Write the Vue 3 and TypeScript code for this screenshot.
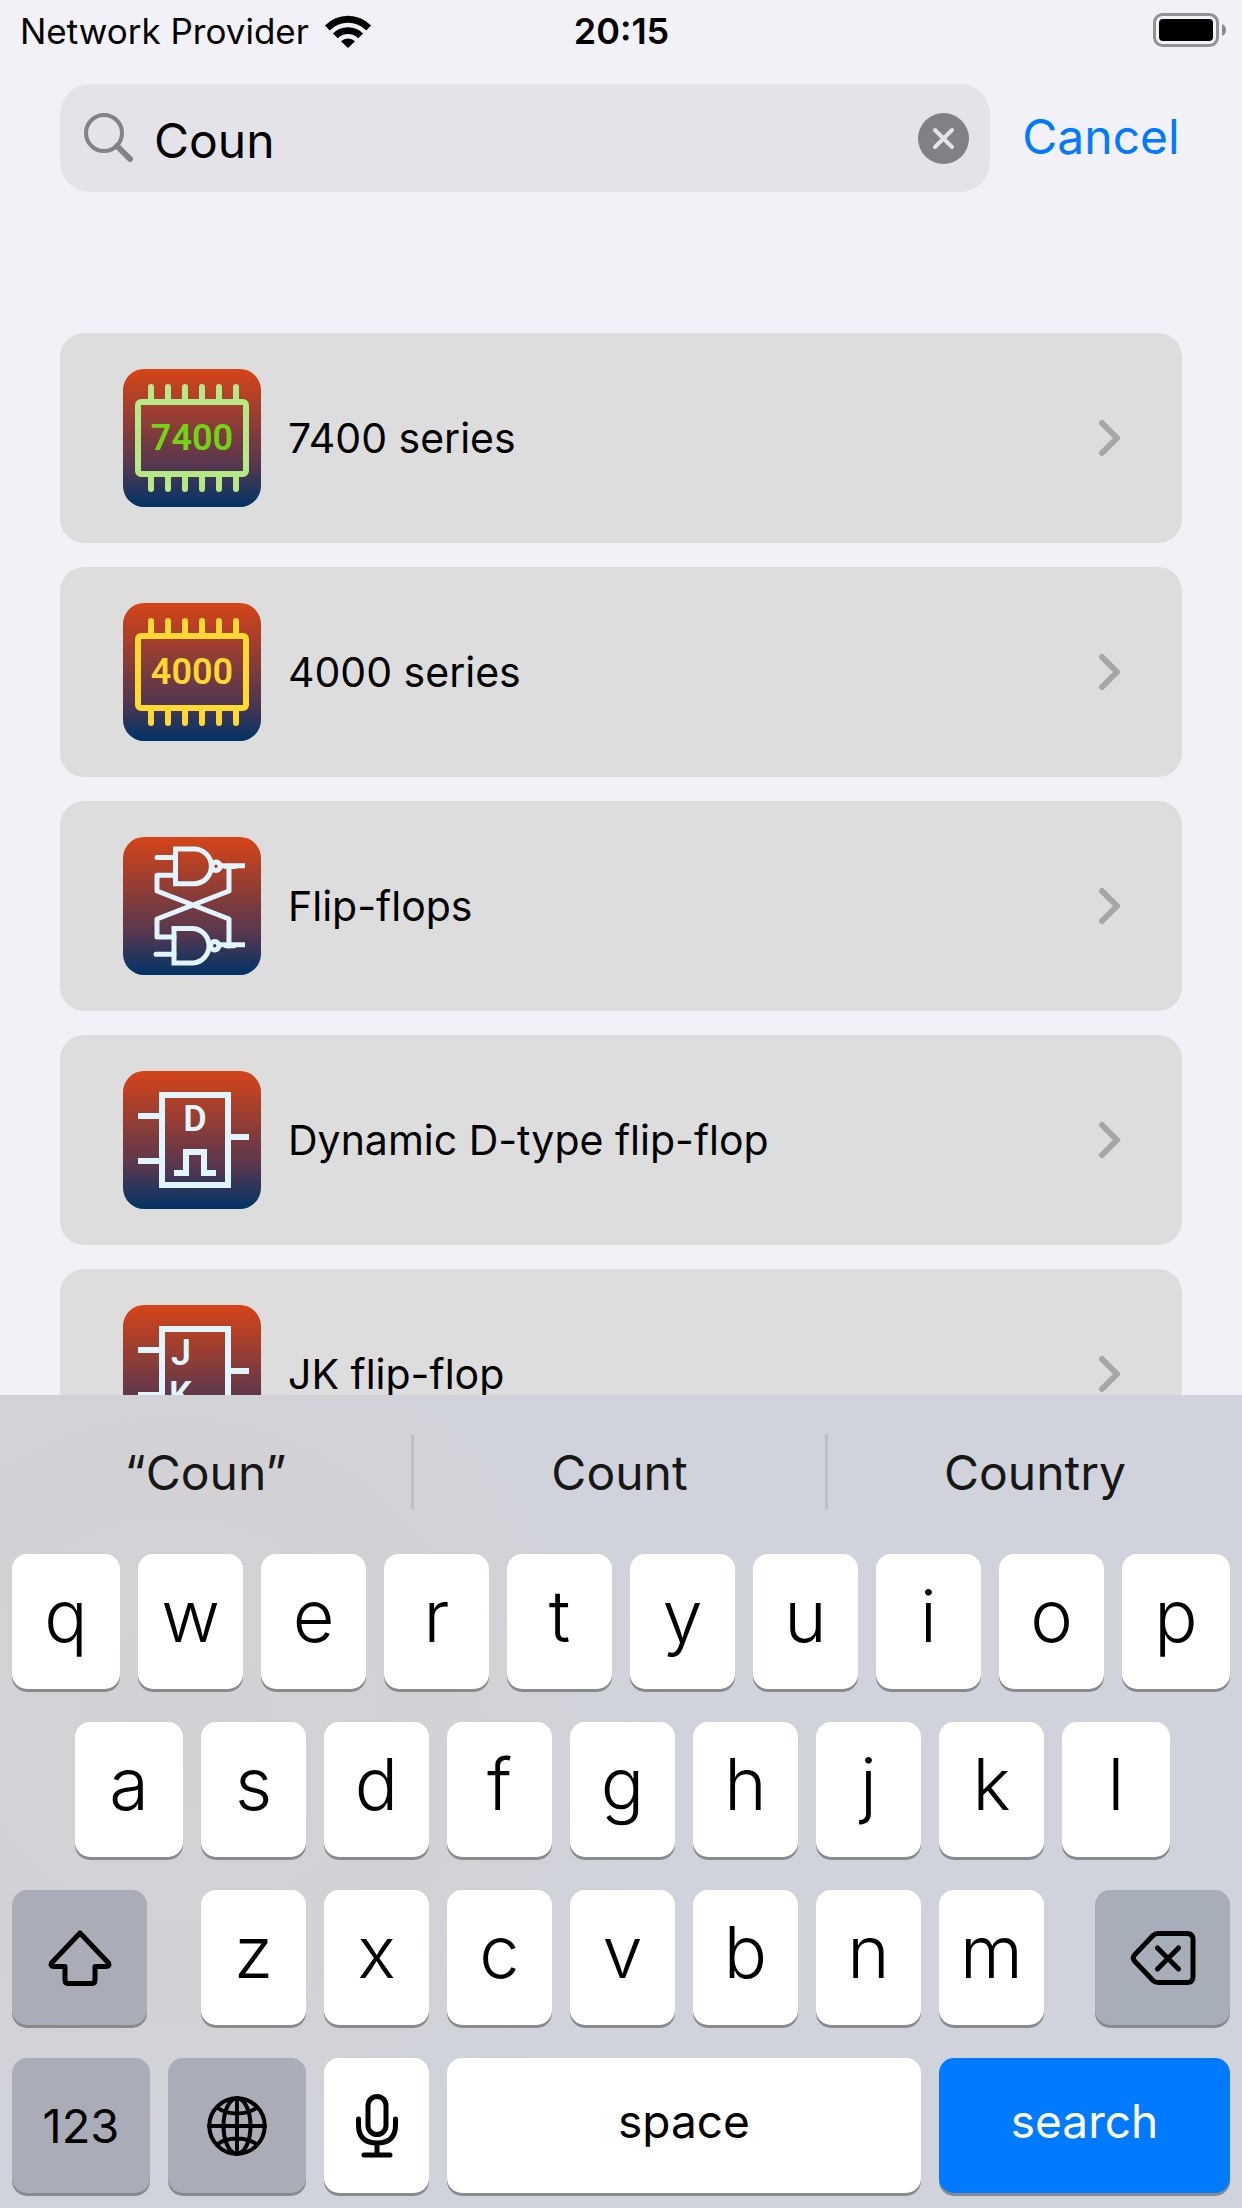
<script setup lang="ts">
import { ref } from 'vue'

type IconKind = 'chip' | 'latch' | 'dtype' | 'jk'

interface Entry {
  title: string
  icon: IconKind
  text?: string
  line?: string
  fill?: string
}

const query = ref('Coun')

const entries: Entry[] = [
  { title: '7400 series', icon: 'chip', text: '7400', line: '#b6e888', fill: '#72d414' },
  { title: '4000 series', icon: 'chip', text: '4000', line: '#ffd932', fill: '#ffd932' },
  { title: 'Flip-flops', icon: 'latch' },
  { title: 'Dynamic D-type flip-flop', icon: 'dtype' },
  { title: 'JK flip-flop', icon: 'jk' },
]

const pins = [28, 45, 62, 79, 96, 113]
const suggestions = ['“Coun”', 'Count', 'Country']
const topRow = [...'qwertyuiop']
const homeRow = [...'asdfghjkl']
const bottomRow = [...'zxcvbnm']
</script>

<template>
  <div class="screen">
    <header class="status">
      <div class="carrier">
        <span>Network Provider</span>
        <svg class="wifi" viewBox="0 0 46 34" aria-hidden="true">
          <path d="M0 11.5A32 32 0 0 1 46 11.5L41.200 16.400A25.500 25.500 0 0 0 4.800 16.400Z" />
          <path d="M8 19.500A21 21 0 0 1 38 19.500L33.200 24.300A14.500 14.500 0 0 0 12.800 24.300Z" />
          <path d="M16 27.300A10 10 0 0 1 30 27.300L23 34Z" />
        </svg>
      </div>
      <time class="clock">20:15</time>
      <svg class="battery" viewBox="0 0 74 34" aria-hidden="true">
        <rect x="1.500" y="1.500" width="63" height="31" rx="8" fill="none" stroke="#929196" stroke-width="3" />
        <rect x="6" y="6" width="54" height="22" rx="4" />
        <path d="M69 11Q73 12.500 73 17T69 23Z" fill="#8b8a8f" />
      </svg>
    </header>

    <form class="search" role="search" @submit.prevent>
      <div class="field">
        <svg class="lens" viewBox="0 0 50 50" aria-hidden="true">
          <circle cx="20" cy="20" r="18" />
          <path d="M33 33L46 46" stroke-width="6" />
        </svg>
        <input v-model="query" type="text" aria-label="Search" />
        <button class="clear" type="button" aria-label="Clear text" @click="query = ''">
          <svg viewBox="0 0 51 51">
            <circle cx="25.500" cy="25.500" r="25.500" fill="#808085" />
            <path d="M17 17L34 34M34 17L17 34" stroke="#e4e3e9" stroke-width="4" stroke-linecap="round" />
          </svg>
        </button>
      </div>
      <button class="cancel" type="button">Cancel</button>
    </form>

    <svg class="defs" aria-hidden="true">
      <linearGradient id="tile" x1="0" y1="0" x2="0" y2="1">
        <stop offset="0" stop-color="#d64417" />
        <stop offset="0.700" stop-color="#55374f" />
        <stop offset="1" stop-color="#003366" />
      </linearGradient>
    </svg>

    <main class="list">
      <a v-for="entry in entries" :key="entry.title" class="card" href="#">
        <svg class="icon" viewBox="0 0 138 138" aria-hidden="true">
          <rect width="138" height="138" rx="21" fill="url(#tile)" />
          <g v-if="entry.icon === 'chip'" :stroke="entry.line" stroke-width="6" stroke-linecap="round" fill="none">
            <rect x="15" y="33" width="108" height="72" rx="3" />
            <path v-for="x in pins" :key="x" :d="`M${x} 18V32M${x} 106V120`" />
            <text x="69" y="81" text-anchor="middle" class="glyph" :fill="entry.fill" stroke="none">{{ entry.text }}</text>
          </g>
          <g v-else-if="entry.icon === 'latch'" class="line thin">
            <path d="M52.500 12H71A17.300 17.300 0 0 1 71 46.700H52.500Z" />
            <circle cx="93" cy="29.300" r="4.200" />
            <path d="M51 91.500H70A17.300 17.300 0 0 1 70 126H51Z" />
            <circle cx="91.700" cy="108.700" r="4.200" />
            <path d="M34 20.500H52M52 38.300H34V54L106 82V109M106 29V54L34 82V100H51M33 117.300H51" stroke-linecap="round" stroke-linejoin="round" />
            <path d="M97 28.700H122M96 107.800H122" />
            <path d="M103 29.500H112M103 108.700H111" stroke-width="5" stroke-linecap="round" />
          </g>
          <g v-else class="line">
            <rect x="39" y="24" width="66" height="90" />
            <path d="M15 45H39M15 90H39M105 66H126" />
            <template v-if="entry.icon === 'dtype'">
              <path d="M51 102H63V81H81V102H93" />
              <text x="72" y="60" text-anchor="middle" class="glyph letter">D</text>
            </template>
            <template v-else>
              <text x="48" y="60" class="glyph letter">J</text>
              <text x="46" y="102" class="glyph letter">K</text>
            </template>
          </g>
        </svg>
        <span class="title">{{ entry.title }}</span>
        <svg class="chevron" viewBox="0 0 22 36" aria-hidden="true">
          <path d="M3 3L18 18L3 33" />
        </svg>
      </a>
    </main>

    <section class="keyboard" aria-label="Keyboard">
      <div class="suggestions">
        <button v-for="word in suggestions" :key="word" type="button">{{ word }}</button>
      </div>
      <div class="rows">
        <div class="row">
          <button v-for="k in topRow" :key="k" class="key" type="button">{{ k }}</button>
        </div>
        <div class="row home">
          <button v-for="k in homeRow" :key="k" class="key" type="button">{{ k }}</button>
        </div>
        <div class="row shiftrow">
          <button class="key mod side" type="button" aria-label="Shift">
            <svg class="wide" viewBox="0 0 66 56">
              <path d="M33 3L61.500 33Q63 36.500 59 36.500H48V50Q48 53.500 44.500 53.500H21.500Q18 53.500 18 50V36.500H7Q3 36.500 4.500 33Z" />
            </svg>
          </button>
          <div class="row letters">
            <button v-for="k in bottomRow" :key="k" class="key" type="button">{{ k }}</button>
          </div>
          <button class="key mod side" type="button" aria-label="Delete">
            <svg class="wide" viewBox="0 0 66 56">
              <path d="M28 3.500H57Q63 3.500 63 9.500V46.500Q63 52.500 57 52.500H28Q25 52.500 23 50.500L4.500 31Q2 28 4.500 25L23 5.500Q25 3.500 28 3.500ZM27.500 18L48.500 39M48.500 18L27.500 39" />
            </svg>
          </button>
        </div>
        <div class="row">
          <button class="key mod fn digits" type="button">123</button>
          <button class="key mod fn" type="button" aria-label="Next keyboard">
            <svg class="globe" viewBox="0 0 60 60">
              <circle cx="30" cy="30" r="27.700" />
              <ellipse cx="30" cy="30" rx="13.500" ry="27.700" />
              <path d="M30 2V58M2 30H58M10 11.500Q18 17.500 30 17.500T50 11.500M10 48.500Q18 42.500 30 42.500T50 48.500" />
            </svg>
          </button>
          <button class="key mic" type="button" aria-label="Dictate">
            <svg viewBox="0 0 42 64">
              <rect x="12" y="2.500" width="18" height="38" rx="9" />
              <path d="M2.500 25V31Q2.500 49 21 49T39.500 31V25M21 49V60M8 61H34" />
            </svg>
          </button>
          <button class="key word space" type="button">space</button>
          <button class="key word go" type="submit">search</button>
        </div>
      </div>
    </section>
  </div>
</template>

<style>
body {
  margin: 0;
  background: #f2f1f7;
}
</style>

<style scoped>
.screen {
  display: flex;
  flex-direction: column;
  height: 100vh;
  overflow: hidden;
  background: #f2f1f7;
  color: #000;
  font-family: Inter, 'Liberation Sans', sans-serif;
}

button {
  margin: 0;
  padding: 0;
  border: 0;
  background: none;
  color: inherit;
  font: inherit;
}

svg {
  display: block;
  flex: none;
}

.defs {
  position: absolute;
  width: 0;
  height: 0;
}

.status {
  display: grid;
  grid-template-columns: 1fr auto 1fr;
  align-items: center;
  height: 60px;
  padding: 0 15px 0 16px;
  margin-bottom: 24px;
  font-size: 36px;
}

.carrier {
  display: flex;
  align-items: center;
  gap: 12px;
  padding: 2px 0 0 4px;
  font-size: 35px;
}

.carrier span {
  padding-right: 4px;
}

.wifi {
  width: 46px;
  height: 34px;
}

.clock {
  padding-top: 2px;
  font-weight: 600;
}

.battery {
  justify-self: end;
  width: 74px;
  height: 34px;
}

.search {
  display: flex;
  align-items: center;
  gap: 30px;
  padding: 0 60px;
  margin-bottom: 141px;
}

.field {
  display: flex;
  flex: 1;
  align-items: center;
  min-width: 0;
  height: 108px;
  box-sizing: border-box;
  padding: 0 21px 0 24px;
  border-radius: 30px;
  background: #e4e3e9;
}

.lens {
  width: 50px;
  height: 50px;
  fill: none;
  stroke: #838288;
  stroke-width: 4;
  stroke-linecap: round;
}

.field input {
  flex: 1;
  min-width: 0;
  height: 100%;
  padding: 4px 20px 0;
  border: 0;
  outline: 0;
  background: none;
  color: #000;
  font: inherit;
  font-size: 48px;
  box-sizing: border-box;
}

.clear svg {
  width: 51px;
  height: 51px;
}

.cancel {
  flex: none;
  width: 162px;
  padding-bottom: 3px;
  color: #007aff;
  font-size: 48px;
  white-space: nowrap;
}

.list {
  display: flex;
  flex: 1;
  flex-direction: column;
  gap: 24px;
  min-height: 0;
  padding: 0 60px;
  overflow: hidden;
}

.card {
  display: flex;
  flex: none;
  align-items: center;
  box-sizing: border-box;
  height: 210px;
  padding: 0 61px 0 63px;
  border-radius: 24px;
  background: #ddd;
  color: inherit;
  text-decoration: none;
}

.icon {
  width: 138px;
  height: 138px;
}

.glyph {
  font-family: Roboto, 'Liberation Sans', sans-serif;
  font-size: 36px;
  font-weight: 600;
}

.line {
  fill: none;
  stroke: #e0f5fd;
  stroke-width: 6;
}

.thin {
  stroke-width: 5;
}

.letter {
  fill: #e0f5fd;
  stroke: none;
}

.title {
  flex: 1;
  padding-left: 27px;
  font-size: 41px;
}

.chevron {
  width: 22px;
  height: 36px;
  fill: none;
  stroke: #a6a6a6;
  stroke-width: 6;
  stroke-linecap: round;
  stroke-linejoin: round;
}

.keyboard {
  flex: none;
  background: radial-gradient(ellipse 40% 60% at 14% 40%, #d3d1d5 0%, #d2d2d6 60%, #d0d3dc 100%);
}

.suggestions {
  display: grid;
  grid-template-columns: repeat(3, 1fr);
  padding: 39px 0 45px;
}

.suggestions button {
  height: 75px;
  padding-top: 2px;
  color: #161816;
  font-size: 48px;
  line-height: 73px;
}

.suggestions button:not(:last-child) {
  border-right: 3px solid #bcbfc4;
}

.rows {
  display: flex;
  flex-direction: column;
  gap: 33px;
  padding: 0 12px 15px;
}

.row {
  display: flex;
  gap: 18px;
}

.home {
  padding: 0 60px 0 63px;
}

.key {
  display: flex;
  flex: 105 1 0;
  align-items: center;
  justify-content: center;
  min-width: 0;
  height: 135px;
  padding-bottom: 13px;
  box-sizing: border-box;
  border-radius: 15px;
  background: #fff;
  box-shadow: 0 3px 0 #898a8e;
  font-size: 72px;
  font-weight: 300;
}

.row:not(.letters):not(.shiftrow) > .key:first-child:not(.mod),
.row:not(.letters):not(.shiftrow) > .key:last-child:not(.go) {
  flex-grow: 108;
}

.shiftrow {
  gap: 0;
}

.letters {
  flex: 843 1 0;
  margin: 0 51px 0 54px;
}

.key.side {
  flex-grow: 135;
  padding-bottom: 0;
}

.mod {
  background: #aaacb8;
}

.mod:last-child {
  background: #a7adb9;
}

.key.fn {
  flex-grow: 138;
  padding-bottom: 0;
}

.key.digits {
  font-size: 47px;
  font-weight: 400;
}

.key svg {
  fill: none;
  stroke: #000;
  stroke-width: 5;
  stroke-linecap: round;
  stroke-linejoin: round;
}

.wide {
  width: 66px;
  height: 56px;
}

.key .globe {
  width: 60px;
  height: 60px;
  stroke-width: 4;
}

.key.mic {
  padding-bottom: 0;
}

.mic svg {
  width: 42px;
  height: 64px;
}

.key.word {
  padding-bottom: 10px;
  font-size: 46px;
  font-weight: 400;
}

.key.space {
  flex-grow: 474;
}

.key.go {
  flex-grow: 291;
  background: #007aff;
  color: #fff;
}
</style>
